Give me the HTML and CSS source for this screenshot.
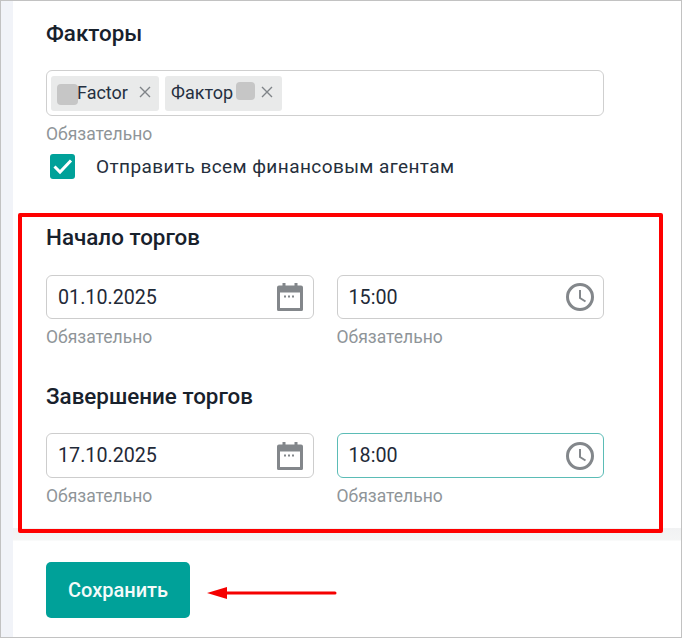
FILE: index.html
```html
<!DOCTYPE html>
<html lang="ru">
<head>
<meta charset="utf-8">
<title>Торги</title>
<link rel="stylesheet" href="styles.css">
</head>
<body>
<div class="frame">
  <div class="strip"></div>
  <main class="panel">
    <form class="form">
      <h2 class="title title-factors">Факторы</h2>
      <div class="chips">
        <span class="chip chip-a"><i class="blob"></i><span class="chip-text">Factor</span><svg class="x" viewBox="0 0 12 12"><path d="M1 1l10 10M11 1L1 11"/></svg></span>
        <span class="chip chip-b"><span class="chip-text">Фактор</span><i class="blob blob-b"></i><svg class="x" viewBox="0 0 12 12"><path d="M1 1l10 10M11 1L1 11"/></svg></span>
      </div>
      <div class="hint">Обязательно</div>
      <label class="check">
        <span class="box"><svg viewBox="0 0 25 25"><path d="M4.500 12.500l5.500 5.500L21 6.500"/></svg></span>
        <span class="check-text">Отправить всем финансовым агентам</span>
      </label>

      <h2 class="title title-start">Начало торгов</h2>
      <div class="row">
        <div class="field">
          <div class="input"><span>01.10.2025</span>
            <svg class="ico" viewBox="0 0 26 28"><path class="fill" d="M0 4.500A2 2 0 0 1 2 2.500h3.500V0h3v2.500h9V0h3v2.500H24a2 2 0 0 1 2 2v22a1.500 1.500 0 0 1-1.500 1.500h-23A1.500 1.500 0 0 1 0 26.500z"/><rect class="paper" x="3" y="9.500" width="20" height="15.500"/><path class="dots" d="M7 13.500h12"/></svg>
          </div>
          <div class="hint">Обязательно</div>
        </div>
        <div class="field">
          <div class="input"><span>15:00</span>
            <svg class="ico ico-clock" viewBox="0 0 28 28"><circle cx="14" cy="14" r="12.500"/><path class="hand" d="M14 7V15l5.500 3.500"/></svg>
          </div>
          <div class="hint">Обязательно</div>
        </div>
      </div>

      <h2 class="title title-end">Завершение торгов</h2>
      <div class="row row-end">
        <div class="field">
          <div class="input"><span>17.10.2025</span>
            <svg class="ico" viewBox="0 0 26 28"><path class="fill" d="M0 4.500A2 2 0 0 1 2 2.500h3.500V0h3v2.500h9V0h3v2.500H24a2 2 0 0 1 2 2v22a1.500 1.500 0 0 1-1.500 1.500h-23A1.500 1.500 0 0 1 0 26.500z"/><rect class="paper" x="3" y="9.500" width="20" height="15.500"/><path class="dots" d="M7 13.500h12"/></svg>
          </div>
          <div class="hint">Обязательно</div>
        </div>
        <div class="field">
          <div class="input input-focus"><span>18:00</span>
            <svg class="ico ico-clock" viewBox="0 0 28 28"><circle cx="14" cy="14" r="12.500"/><path class="hand" d="M14 7V15l5.500 3.500"/></svg>
          </div>
          <div class="hint">Обязательно</div>
        </div>
      </div>
    </form>
    <footer class="footer">
      <button class="save" type="button">Сохранить</button>
    </footer>
  </main>
  <div class="mark"></div>
  <svg class="arrow" viewBox="0 0 130 14"><path class="arrow-line" d="M14 7H128"/><path class="arrow-head" d="M0 7L20 1V13z"/></svg>
</div>
</body>
</html>
```
FILE: styles.css
```css
* { box-sizing: border-box; }
html, body { margin: 0; padding: 0; background: #fff; }
.frame {
  position: relative;
  width: 682px;
  height: 638px;
  display: flex;
  border: 1px solid #c2c2c2;
  font-family: Roboto, "Liberation Sans", sans-serif;
  color: #1d2733;
  overflow: hidden;
}
.strip { width: 12px; background: #f1f3f8; flex: none; }
.panel { flex: 1; display: flex; flex-direction: column; background: #fff; }
.form { flex: 1; padding: 0 77px 0 33px; display: flex; flex-direction: column; }
.title { margin: 0; font-size: 22.400px; font-weight: 500; line-height: 24px; color: #18212c; }
.title-factors { margin-top: 20px; }
.title-start { margin-top: 46px; }
.title-end { margin-top: 37px; }
.chips {
  margin-top: 25px;
  height: 46px;
  border: 1px solid #cfcfcf;
  border-radius: 6px;
  display: flex;
  align-items: center;
  gap: 6px;
  padding: 0 4px;
}
.chip {
  position: relative;
  height: 35px;
  background: #e9eaea;
  border-radius: 3px;
  display: flex;
  align-items: center;
  font-size: 18px;
  color: #253041;
}
.chip-text { position: relative; top: -1px; }
.chip-a { width: 108px; padding-left: 26px; }
.chip-b { width: 117px; padding-left: 6px; }
.blob {
  position: absolute;
  width: 21px;
  height: 21px;
  top: 8px;
  left: 6px;
  background: #c6c6c6;
  border-radius: 4px;
  filter: blur(.6px);
}
.blob-b { left: 71px; top: 6px; width: 19px; height: 18px; }
.x { position: absolute; width: 12px; height: 12px; top: 10px; right: 8px; fill: none; stroke: #7f8488; stroke-width: 1.400; }
.chip-b .x { right: 9px; }
.hint { margin-top: 9px; font-size: 17.500px; line-height: 19px; color: #8f9599; }
.check { display: flex; align-items: center; margin: 10px 0 0 4px; height: 25px; }
.box { width: 25px; height: 25px; background: #00a199; border-radius: 3px; flex: none; }
.box svg { display: block; width: 25px; height: 25px; fill: none; stroke: #fff; stroke-width: 3; }
.check-text { margin-left: 21px; font-size: 19px; letter-spacing: .42px; color: #252f3c; }
.row { display: flex; gap: 23px; margin-top: 26px; }
.row-end { margin-top: 25px; }
.field { flex: 1; min-width: 0; }
.input {
  height: 44px;
  border: 1px solid #cdcdcd;
  border-radius: 6px;
  display: flex;
  align-items: center;
  justify-content: space-between;
  padding: 0 10px 0 11px;
  font-size: 19.700px;
  color: #1f2a38;
}
.row-end .input { height: 45px; }
.input-focus { border-color: #5bbcb6; }
.ico { width: 26px; height: 28px; flex: none; }
.ico .fill { fill: #83878b; }
.ico .paper { fill: #fff; }
.ico .dots { stroke: #83878b; stroke-width: 2; stroke-dasharray: 2 2; fill: none; }
.ico-clock { width: 28px; height: 28px; margin-right: -1px; fill: none; stroke: #83878b; stroke-width: 3; }
.ico-clock .hand { stroke-width: 2; }
.footer {
  height: 109px;
  flex: none;
  padding: 34px 0 0 33px;
  background: linear-gradient(#f1f2f3 0, #f4f5f5 12px, #fff 13px, #fff 100%);
}
.save {
  display: block;
  width: 144px;
  height: 56px;
  border: 0;
  border-radius: 5px;
  background: #00a199;
  color: #f4fbfa;
  font: 500 20px Roboto, "Liberation Sans", sans-serif;
}
.mark {
  position: absolute;
  left: 17px;
  top: 212px;
  width: 645px;
  height: 320px;
  border: 4px solid #fe0000;
  border-radius: 2px;
}
.arrow { position: absolute; left: 206px; top: 585px; width: 130px; height: 14px; }
.arrow-line { stroke: #f50000; stroke-width: 3; stroke-linecap: round; fill: none; }
.arrow-head { fill: #f50000; }
```
